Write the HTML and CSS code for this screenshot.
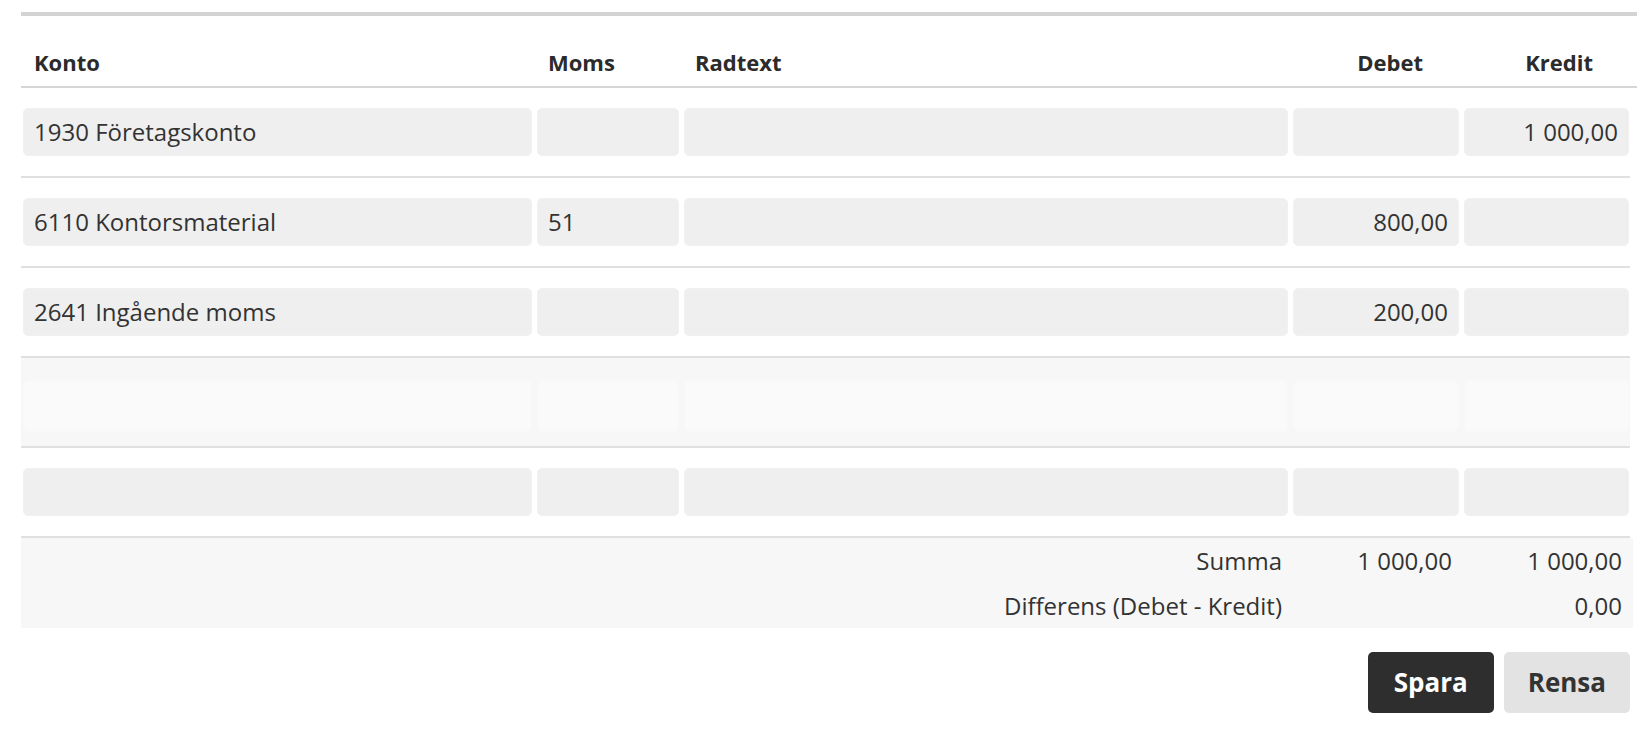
FILE: index.html
```html
<!DOCTYPE html>
<html lang="sv">
<head>
<meta charset="utf-8">
<title>Verifikation</title>
<link rel="stylesheet" href="styles.css">
</head>
<body>
<div class="page">
  <div class="top-bar"></div>
  <div class="table">
    <div class="thead grid">
      <div class="th">Konto</div>
      <div class="th">Moms</div>
      <div class="th">Radtext</div>
      <div class="th num">Debet</div>
      <div class="th num">Kredit</div>
    </div>
    <div class="row grid">
      <div class="field">1930 Företagskonto</div>
      <div class="field"></div>
      <div class="field"></div>
      <div class="field num"></div>
      <div class="field num">1 000,00</div>
    </div>
    <div class="row grid">
      <div class="field">6110 Kontorsmaterial</div>
      <div class="field">51</div>
      <div class="field"></div>
      <div class="field num">800,00</div>
      <div class="field num"></div>
    </div>
    <div class="row grid">
      <div class="field">2641 Ingående moms</div>
      <div class="field"></div>
      <div class="field"></div>
      <div class="field num">200,00</div>
      <div class="field num"></div>
    </div>
    <div class="row grid row-fading">
      <div class="field"></div>
      <div class="field"></div>
      <div class="field"></div>
      <div class="field num"></div>
      <div class="field num"></div>
    </div>
    <div class="row grid">
      <div class="field"></div>
      <div class="field"></div>
      <div class="field"></div>
      <div class="field num"></div>
      <div class="field num"></div>
    </div>
    <div class="tfoot">
      <div class="sum grid">
        <div class="sum-label">Summa</div>
        <div class="sum-val">1 000,00</div>
        <div class="sum-val">1 000,00</div>
      </div>
      <div class="sum grid">
        <div class="sum-label">Differens (Debet - Kredit)</div>
        <div class="sum-val"></div>
        <div class="sum-val">0,00</div>
      </div>
    </div>
  </div>
  <div class="actions">
    <button class="btn btn-primary">Spara</button>
    <button class="btn btn-secondary">Rensa</button>
  </div>
</div>
</body>
</html>
```

FILE: styles.css
```css
* { box-sizing: border-box; }

html, body {
  margin: 0;
  padding: 0;
  background: #ffffff;
}

body {
  font-family: "Open Sans", "Liberation Sans", sans-serif;
  color: #333333;
}

.page {
  padding: 12px 15px 0 21px;
}

.top-bar {
  height: 4px;
  background: #d3d3d3;
}

.grid {
  display: grid;
  grid-template-columns: 509px 142px 604px 166px 165px;
  column-gap: 5px;
}

.thead {
  padding: 31px 0 9px 2px;
  border-bottom: 2px solid #d6d6d6;
}

.th {
  font-size: 22px;
  font-weight: 700;
  line-height: 30px;
  color: #2b2b2b;
  padding-left: 11px;
}

.th.num {
  text-align: right;
  padding-left: 0;
  padding-right: 36px;
}

.row {
  padding: 20px 0 20px 2px;
  margin-right: 7px;
  border-bottom: 2px solid #e0e0e0;
}

.field {
  height: 48px;
  background: #efefef;
  border: 1px solid #f1f1f1;
  border-radius: 5px;
  font-size: 24px;
  line-height: 46px;
  padding: 0 10px;
  color: #333333;
  white-space: nowrap;
  overflow: hidden;
}

.field.num {
  text-align: right;
}

.row-fading {
  background: #f7f7f7;
}

.row-fading .field {
  background: #fafafa;
  border-color: #f8f8f8;
  height: 52px;
  margin-top: 2px;
  margin-bottom: -6px;
}

.tfoot {
  background: #f7f7f7;
  margin-right: 4px;
  padding-left: 2px;
}

.sum {
  height: 45px;
  font-size: 24px;
  line-height: 45px;
  color: #333333;
}

.sum-label {
  grid-column: 1 / span 3;
  text-align: right;
  padding-right: 6px;
}

.sum-val {
  text-align: right;
  padding-right: 7px;
}

.actions {
  display: flex;
  justify-content: flex-end;
  gap: 10px;
  margin-top: 24px;
  margin-right: 7px;
}

.btn {
  height: 61px;
  padding: 0 26px;
  border: none;
  border-radius: 5px;
  font-family: "Open Sans", "Liberation Sans", sans-serif;
  font-size: 26px;
  font-weight: 700;
  line-height: 61px;
  cursor: pointer;
}

.btn-primary {
  background: #2e2e2e;
  color: #ffffff;
}

.btn-secondary {
  background: #e3e3e3;
  color: #333333;
  padding: 0 24px;
}
```
